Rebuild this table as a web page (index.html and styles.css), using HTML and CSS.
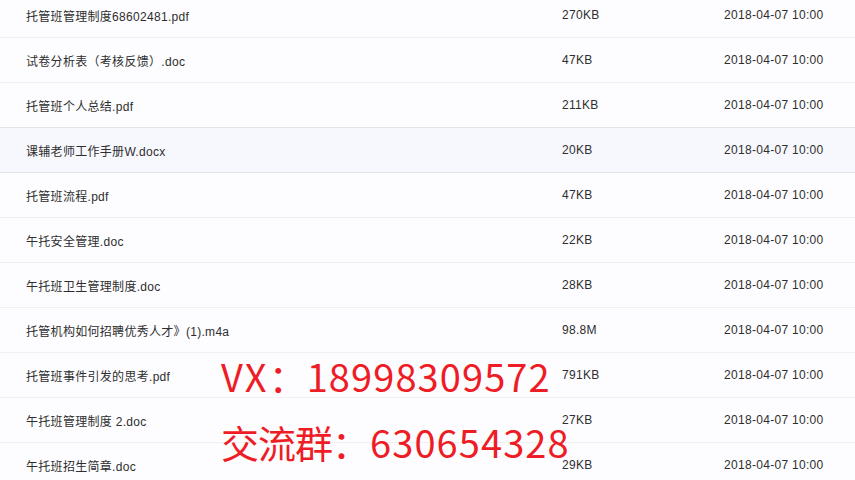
FILE: index.html
```html
<!DOCTYPE html>
<html lang="zh-CN">

<head>
    <meta charset="UTF-8">
    <meta name="viewport" content="width=device-width, initial-scale=1.0">
    <title>文件列表</title>
    <link rel="stylesheet" href="styles.css">
</head>

<body>
    <div class="file-page">
        <div class="file-list">
            <div class="file-row">
                <span class="file-name">托管班管理制度68602481.pdf</span>
                <span class="file-size">270KB</span>
                <span class="file-date">2018-04-07 10:00</span>
            </div>
            <div class="file-row">
                <span class="file-name">试卷分析表（考核反馈）.doc</span>
                <span class="file-size">47KB</span>
                <span class="file-date">2018-04-07 10:00</span>
            </div>
            <div class="file-row">
                <span class="file-name">托管班个人总结.pdf</span>
                <span class="file-size">211KB</span>
                <span class="file-date">2018-04-07 10:00</span>
            </div>
            <div class="file-row active">
                <span class="file-name">课辅老师工作手册W.docx</span>
                <span class="file-size">20KB</span>
                <span class="file-date">2018-04-07 10:00</span>
            </div>
            <div class="file-row">
                <span class="file-name">托管班流程.pdf</span>
                <span class="file-size">47KB</span>
                <span class="file-date">2018-04-07 10:00</span>
            </div>
            <div class="file-row">
                <span class="file-name">午托安全管理.doc</span>
                <span class="file-size">22KB</span>
                <span class="file-date">2018-04-07 10:00</span>
            </div>
            <div class="file-row">
                <span class="file-name">午托班卫生管理制度.doc</span>
                <span class="file-size">28KB</span>
                <span class="file-date">2018-04-07 10:00</span>
            </div>
            <div class="file-row">
                <span class="file-name">托管机构如何招聘优秀人才》(1).m4a</span>
                <span class="file-size">98.8M</span>
                <span class="file-date">2018-04-07 10:00</span>
            </div>
            <div class="file-row">
                <span class="file-name">托管班事件引发的思考.pdf</span>
                <span class="file-size">791KB</span>
                <span class="file-date">2018-04-07 10:00</span>
            </div>
            <div class="file-row">
                <span class="file-name">午托班管理制度 2.doc</span>
                <span class="file-size">27KB</span>
                <span class="file-date">2018-04-07 10:00</span>
            </div>
            <div class="file-row">
                <span class="file-name">午托班招生简章.doc</span>
                <span class="file-size">29KB</span>
                <span class="file-date">2018-04-07 10:00</span>
            </div>
        </div>

        <!-- contact watermark over the list -->
        <div class="contact">
            <div class="contact-line"><span class="latin">VX</span>：<span class="digits">18998309572</span></div>
            <div class="contact-line"><span class="cjk">交流群</span>：<span class="digits">630654328</span></div>
        </div>
    </div>
</body>

</html>
```

FILE: styles.css
```css
body {
    margin: 0;
    padding: 0;
    background-color: #fdfdff;
    font-family: "Liberation Sans", "Noto Sans CJK SC", sans-serif;
    overflow: hidden;
}

.file-page {
    position: relative;
    width: 855px;
    height: 480px;
    overflow: hidden;
}

.file-list {
    margin-top: -8px;
}

.file-row {
    display: grid;
    grid-template-columns: 536px 162px 1fr;
    align-items: center;
    height: 44px;
    padding-left: 26px;
    border-top: 1px solid #f0f0f3;
    font-size: 12px;
    letter-spacing: 0.3px;
    color: #2e2e2e;
}

.file-row.active {
    background-color: #f7f8fd;
    border-top-color: #e2e4eb;
}

.file-row.active + .file-row {
    border-top-color: #e2e4eb;
}

.file-name,
.file-size,
.file-date {
    white-space: nowrap;
}

.contact {
    position: absolute;
    left: 221px;
    top: 343px;
    color: #ee1c25;
    font-family: "Noto Sans CJK SC", sans-serif;
    font-size: 38px;
}

.contact-line {
    height: 66px;
    line-height: 66px;
    white-space: nowrap;
}

.contact .latin {
    letter-spacing: 2px;
}

.contact .cjk {
    letter-spacing: -1px;
}

.contact .digits {
    letter-spacing: 1.1px;
}
```
